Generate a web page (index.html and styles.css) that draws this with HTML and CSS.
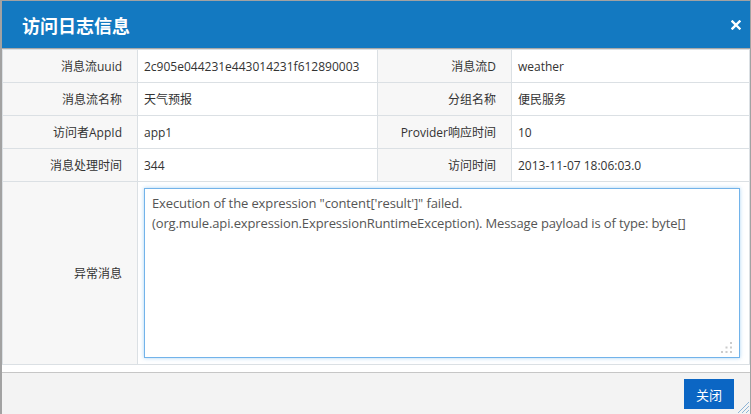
FILE: index.html
```html
<!DOCTYPE html>
<html lang="zh">
<head>
<meta charset="utf-8">
<title>访问日志信息</title>
<link rel="stylesheet" href="styles.css">
</head>
<body>
<div class="dialog">
  <div class="header">
    <span class="title">访问日志信息</span>
    <svg class="close" width="10" height="10" viewBox="0 0 10 10"><path d="M1.5 1.5 L8.5 8.5 M8.5 1.5 L1.5 8.5" stroke="#fff" stroke-width="2.4" stroke-linecap="square"/></svg>
  </div>
  <div class="content">
    <table class="info">
      <colgroup><col class="c1"><col class="c2"><col class="c3"><col class="c4"></colgroup>
      <tr><th>消息流uuid</th><td>2c905e044231e443014231f612890003</td><th>消息流D</th><td>weather</td></tr>
      <tr><th>消息流名称</th><td>天气预报</td><th>分组名称</th><td>便民服务</td></tr>
      <tr><th>访问者AppId</th><td>app1</td><th>Provider响应时间</th><td>10</td></tr>
      <tr><th>消息处理时间</th><td>344</td><th>访问时间</th><td>2013-11-07 18:06:03.0</td></tr>
      <tr class="big"><th>异常消息</th><td colspan="3" class="tacell"><div class="tawrap"><textarea class="msg">Execution of the expression "content['result']" failed. (org.mule.api.expression.ExpressionRuntimeException). Message payload is of type: byte[]</textarea><svg class="grip" width="11" height="11" viewBox="0 0 11 11"><rect x="9" y="0" width="2" height="2"/><rect x="4.5" y="4.5" width="2" height="2"/><rect x="9" y="4.5" width="2" height="2"/><rect x="0" y="9" width="2" height="2"/><rect x="4.5" y="9" width="2" height="2"/><rect x="9" y="9" width="2" height="2"/></svg></div></td></tr>
    </table>
  </div>
  <div class="footer">
    <button class="btn">关闭</button>
  </div>
  <svg class="resize" width="14" height="14" viewBox="0 0 14 14"><path d="M13 2 L2 13 M13 6 L6 13 M13 10 L10 13" stroke="#8fb4d6" stroke-width="1"/></svg>
</div>
</body>
</html>
```
FILE: styles.css
```css
html, body {
  margin: 0;
  padding: 0;
  background: #fff;
}
.dialog {
  position: relative;
  width: 751px;
  height: 414px;
  box-sizing: border-box;
  border: 1px solid #a2a2a2;
  border-left-width: 2px;
  border-bottom: none;
  display: flex;
  flex-direction: column;
  font-family: "Open Sans", "Noto Sans CJK SC", sans-serif;
  font-size: 12px;
  color: #333;
  overflow: hidden;
}
.header {
  height: 47px;
  flex: none;
  background: #1379c1;
  border-bottom: 1px solid #a8a8a8;
  display: flex;
  align-items: center;
  justify-content: space-between;
  padding: 0 9px 0 20px;
}
.title {
  color: #fff;
  font-family: "Noto Sans CJK SC", sans-serif;
  font-weight: bold;
  font-size: 18px;
  line-height: 20px;
  margin-top: 1px;
}
.close {
  display: block;
  margin-top: 1px;
}
.content {
  flex: none;
  padding-bottom: 7px;
}
.info {
  width: 100%;
  table-layout: fixed;
  border-collapse: collapse;
  border: 1px solid #dbe0e4;
}
.c1 { width: 135px; }
.c2 { width: 240px; }
.c3 { width: 134px; }
.c4 { width: 238px; }
.info th, .info td {
  border: 1px solid #dbe0e4;
  height: 33px;
  padding: 0;
  box-sizing: border-box;
  vertical-align: middle;
  font-weight: normal;
  white-space: nowrap;
}
.info th {
  background: #f7f7f7;
  text-align: right;
  padding-right: 15px;
}
.info td {
  background: #fff;
  text-align: left;
  padding-left: 6px;
}
.info tr.big th, .info tr.big td {
  height: 183px;
}
.info td.tacell {
  padding: 6px 9px 6px 6px;
}
.tawrap {
  position: relative;
  height: 170px;
}
.msg {
  display: block;
  width: 100%;
  height: 170px;
  box-sizing: border-box;
  margin: 0;
  border: 1px solid #72b3ea;
  box-shadow: 0 0 4px rgba(102, 175, 233, 0.55);
  outline: none;
  resize: none;
  padding: 4px 7px;
  font-family: "Open Sans", sans-serif;
  font-size: 13px;
  line-height: 20px;
  color: #555;
  letter-spacing: -0.12px;
  white-space: pre-wrap;
  overflow: hidden;
}
.grip {
  position: absolute;
  right: 8px;
  bottom: 5px;
  fill: #cccccc;
}
.footer {
  flex: 1;
  background: #f3f3f3;
  display: flex;
  justify-content: flex-end;
  align-items: flex-start;
  padding: 6px 16px 0 0;
  border-top: 1px solid #c6c6c6;
}
.btn {
  width: 50px;
  height: 30px;
  border: none;
  background: #0b66c4;
  color: #fff;
  font-family: "Noto Sans CJK SC", sans-serif;
  font-size: 13px;
  padding: 0;
}
.resize {
  position: absolute;
  right: 0;
  bottom: 0;
}
```
